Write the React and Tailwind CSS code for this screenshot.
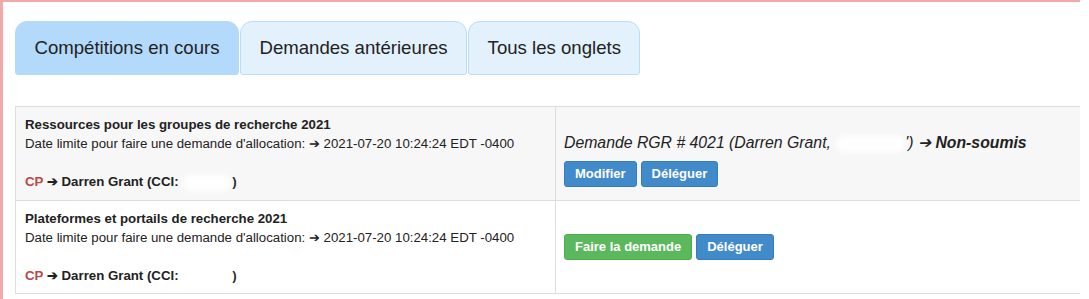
import React from 'react';

const tabs = [
  { label: 'Compétitions en cours', active: true },
  { label: 'Demandes antérieures' },
  { label: 'Tous les onglets' },
];

function Blur({ w, className = '' }) {
  return <span className={`inline-block h-[18px] align-middle rounded-full bg-white/80 blur-[2px] ${className}`} style={{ width: w }} />;
}

function Btn({ children, color = 'blue' }) {
  const cls =
    color === 'green'
      ? 'bg-[#5cb85c] border-[#4cae4c]'
      : 'bg-[#428bca] border-[#357ebd]';
  return (
    <button className={`${cls} border text-white font-bold text-[13px] leading-[24px] px-[10px] rounded-[3px]`}>
      {children}
    </button>
  );
}

function Info({ title, cci }) {
  return (
    <div className="px-[9px] py-[8px] text-[13.25px] leading-[19px] text-[#222]">
      <div className="font-bold">{title}</div>
      <div>Date limite pour faire une demande d'allocation: ➔ 2021-07-20 10:24:24 EDT -0400</div>
      <div className="h-[19px]" />
      <div className="font-bold">
        <span className="text-[#b94a48]">CP</span> ➔ Darren Grant (CCI: <Blur w={50} />)
      </div>
    </div>
  );
}

export default function App() {
  return (
    <div className="w-[1080px] h-[299px] overflow-hidden bg-white border-l-[3px] border-t-[2px] border-[#f4a9a9] pl-[12px] pt-[19px]" style={{ fontFamily: '"Liberation Sans", Arial, sans-serif' }}>
      <div className="flex gap-[1px]">
        {tabs.map((t) => (
          <div
            key={t.label}
            className={`h-[54px] px-[18.5px] flex items-center text-[18.6px] text-[#222] rounded-t-[12px] rounded-b-[3px] border ${
              t.active ? 'bg-[#b3d9fb] border-[#b3d9fb]' : 'bg-[#e3f1fd] border-[#bcdcf7]'
            }`}
          >
            {t.label}
          </div>
        ))}
      </div>
      <div className="mt-[31px] w-[1080px] border-l border-t border-[#ddd]">
        <div className="flex bg-[#f7f7f7] border-b border-[#ddd]">
          <div className="w-[540px] border-r border-[#ddd]">
            <Info title="Ressources pour les groupes de recherche 2021" />
          </div>
          <div className="flex-1 px-[8px] pt-[26px]">
            <div className="italic text-[15.8px] leading-[20px] text-[#222]">
              Demande RGR # 4021 (Darren Grant, <Blur w={70} />') ➔ <span className="font-bold">Non-soumis</span>
            </div>
            <div className="flex gap-[4px] mt-[8px]">
              <Btn>Modifier</Btn>
              <Btn>Déléguer</Btn>
            </div>
          </div>
        </div>
        <div className="flex bg-white border-b border-[#ddd]">
          <div className="w-[540px] border-r border-[#ddd]">
            <Info title="Plateformes et portails de recherche 2021" />
          </div>
          <div className="flex-1 px-[8px] flex items-center gap-[4px]">
            <Btn color="green">Faire la demande</Btn>
            <Btn>Déléguer</Btn>
          </div>
        </div>
      </div>
    </div>
  );
}
